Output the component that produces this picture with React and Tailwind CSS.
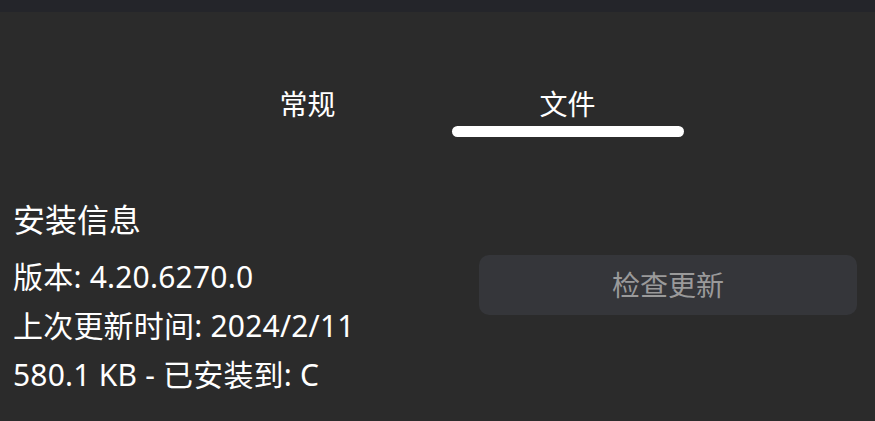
import React from 'react';

const font = { fontFamily: '"Noto Sans", "Noto Sans CJK SC", sans-serif' };

export default function App() {
  return (
    <div className="w-[875px] h-[421px] overflow-hidden bg-[#2b2b2b] text-white" style={font}>
      {/* top strip */}
      <div className="h-[12px] bg-[#24252a]" />

      {/* tabs */}
      <div className="pt-[76px] flex justify-center gap-[28px]">
        <div className="w-[232px] flex flex-col items-center">
          <span className="text-[28px] leading-[32px]">常规</span>
          <div className="mt-[6px] h-[11px] w-full" />
        </div>
        <div className="w-[232px] flex flex-col items-center">
          <span className="text-[28px] leading-[32px]">文件</span>
          <div className="mt-[6px] h-[11px] w-full rounded-full bg-white" />
        </div>
      </div>

      {/* install info */}
      <div className="mt-[63px] pl-[13px] pr-[18px]">
        <h2 className="text-[32px] leading-[40px] mb-[12px] font-normal">安装信息</h2>
        <div className="flex items-start justify-between">
          <div className="text-[30px] leading-[49px] tracking-[0.2px]">
            <p>版本: 4.20.6270.0</p>
            <p>上次更新时间: 2024/2/11</p>
            <p>580.1 KB - 已安装到: C</p>
          </div>
          <button className="mt-[3px] w-[378px] h-[60px] rounded-[10px] bg-[#35363a] text-[#9a9a9a] text-[28px] leading-[32px]">
            检查更新
          </button>
        </div>
      </div>
    </div>
  );
}
